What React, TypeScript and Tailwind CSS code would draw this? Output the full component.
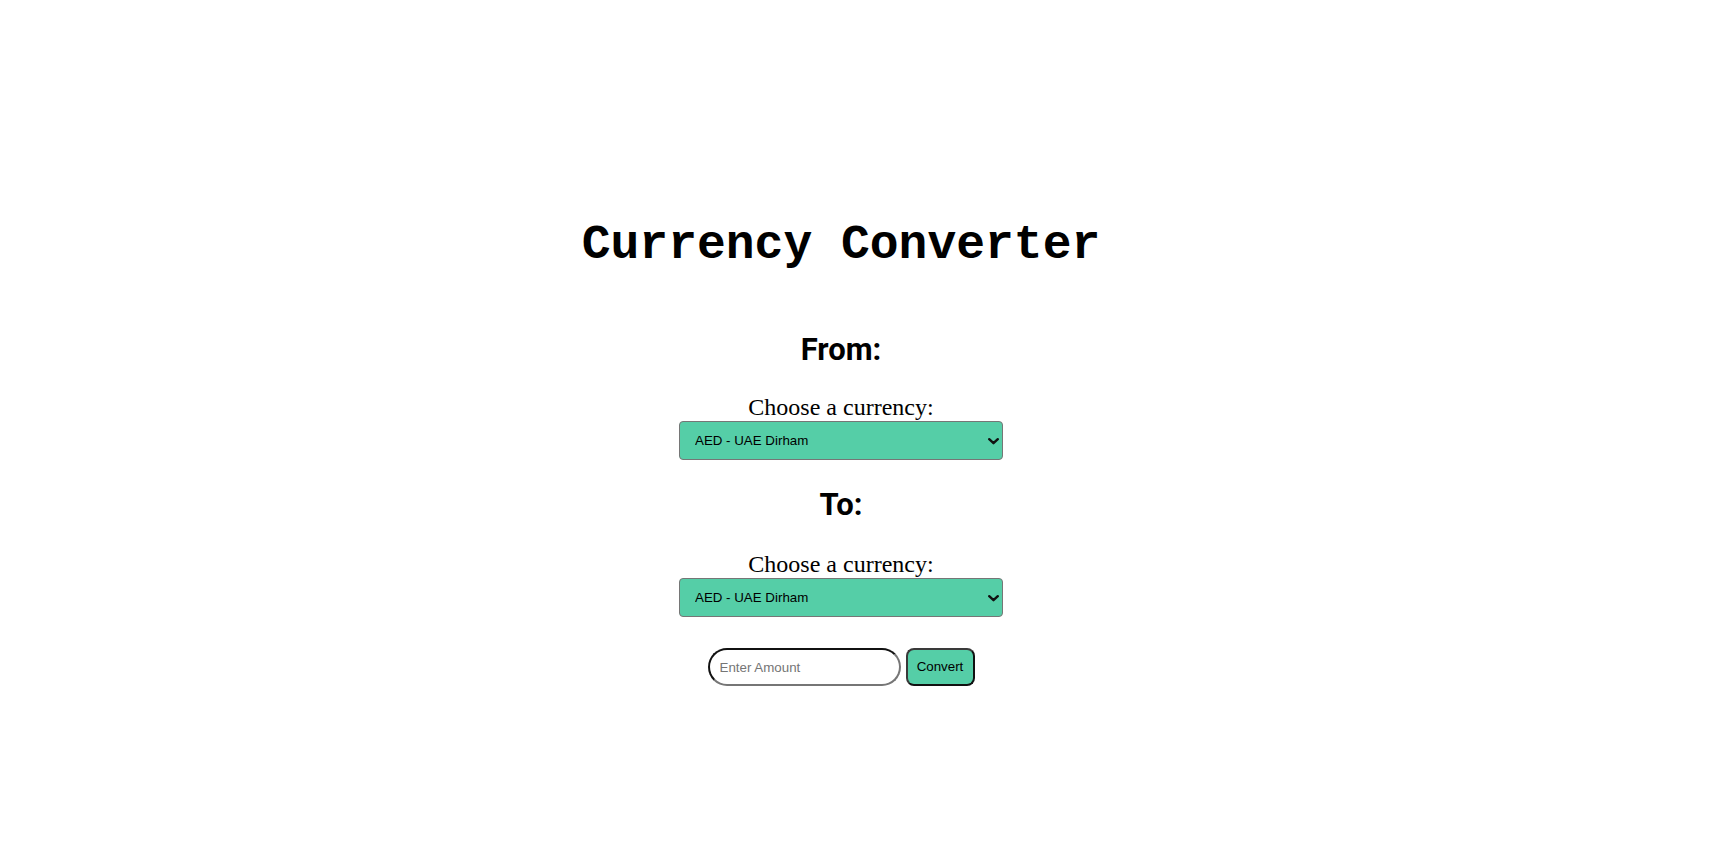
import React from "react";

const Chevron = () => (
  <svg
    className="pointer-events-none absolute right-[4px] top-[17px]"
    width="11"
    height="7"
    viewBox="0 0 11 7"
  >
    <path d="M1.2 1.2 L5.5 5.2 L9.8 1.2" fill="none" stroke="#111" strokeWidth="2.4" strokeLinecap="round" strokeLinejoin="round" />
  </svg>
);

const CurrencySelect = () => (
  <div className="relative w-[324px] h-[39px]">
    <select
      defaultValue="AED"
      className="appearance-none w-full h-full bg-[#55cea7] border border-solid border-[#767676] rounded-[4px] pl-[15px] text-[13.33px] text-black outline-none"
      style={{ fontFamily: '"Liberation Sans", Arial, sans-serif' }}
    >
      <option value="AED">AED - UAE Dirham</option>
      <option value="USD">USD - US Dollar</option>
      <option value="EUR">EUR - Euro</option>
    </select>
    <Chevron />
  </div>
);

const headFont = { fontFamily: 'Roboto, "Liberation Sans", sans-serif' };
const serifFont = { fontFamily: '"Liberation Serif", "Times New Roman", serif' };

export default function App() {
  return (
    <div className="w-full min-h-[852px] bg-white">
      <div className="w-[1682px] flex flex-col items-center text-black">
        <h1
          className="mt-[221px] text-[48px] leading-[48px] font-bold"
          style={{ fontFamily: '"Courier New", "Nimbus Mono PS", "Nimbus Mono L", FreeMono, Courier, "Liberation Mono", monospace' }}
        >
          Currency Converter
        </h1>
        <h2 className="mt-[65px] text-[31px] leading-[31px] font-bold" style={headFont}>
          From:
        </h2>
        <label className="mt-[30px] text-[24px] leading-[24px]" style={serifFont}>
          Choose a currency:
        </label>
        <div className="mt-[2px]">
          <CurrencySelect />
        </div>
        <h2 className="mt-[29px] text-[31px] leading-[31px] font-bold" style={headFont}>
          To:
        </h2>
        <label className="mt-[32px] text-[24px] leading-[24px]" style={serifFont}>
          Choose a currency:
        </label>
        <div className="mt-[2px]">
          <CurrencySelect />
        </div>
        <div className="mt-[31px] flex items-center gap-[5px]" style={{ fontFamily: '"Liberation Sans", Arial, sans-serif' }}>
          <input
            type="text"
            placeholder="Enter Amount"
            className="w-[193px] h-[38px] rounded-full border-2 border-solid border-t-[#111] border-l-[#111] border-r-[#767676] border-b-[#767676] px-[10px] text-[13.33px] text-black placeholder:text-[#757575] outline-none bg-white"
          />
          <button className="w-[69px] h-[38px] rounded-[8px] border-2 border-solid border-t-[#3a3a3a] border-l-[#3a3a3a] border-r-[#111] border-b-[#111] bg-[#55cea7] text-[13.33px] text-black">
            Convert
          </button>
        </div>
      </div>
    </div>
  );
}
